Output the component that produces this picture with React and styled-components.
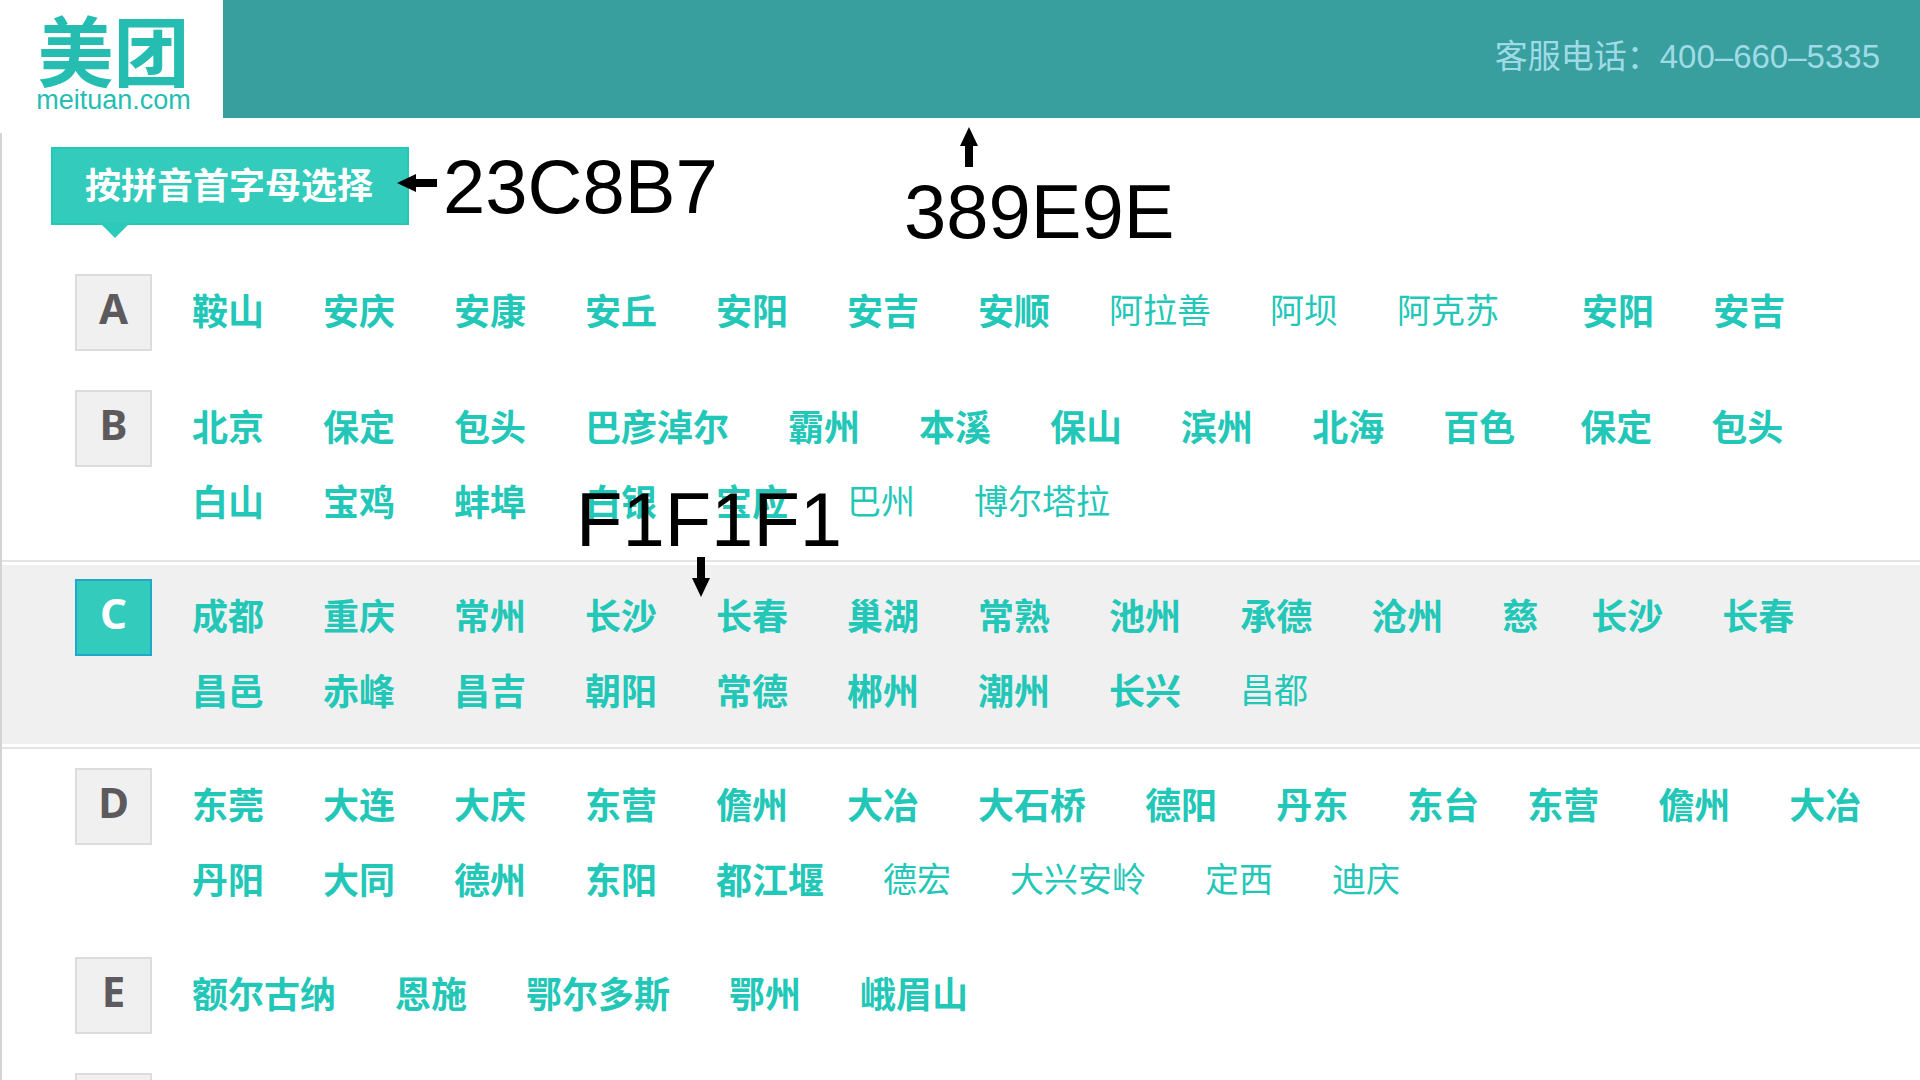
import React from "react";
import styled, { createGlobalStyle, css } from "styled-components";

const GlobalStyle = createGlobalStyle`
  *, *::before, *::after { box-sizing: border-box; }
  body {
    margin: 0;
    background: #fff;
    font-family: "Liberation Sans", "Noto Sans CJK SC", sans-serif;
  }
`;

const Page = styled.div`
  position: relative;
  display: flex;
  flex-direction: column;
  height: 100vh;
  overflow: hidden;
`;

const Header = styled.header`
  display: flex;
  flex: none;
  height: 118px;
  background: #389e9e;
`;

const Logo = styled.a`
  display: flex;
  flex-direction: column;
  align-items: center;
  width: 223px;
  padding: 10px 0 0 4px;
  background: #fff;
  color: #25bdb2;
  text-decoration: none;
`;

const LogoName = styled.span`
  font: 700 76px/76px "Noto Sans CJK SC", sans-serif;
`;

const LogoDomain = styled.span`
  font-size: 27px;
  line-height: 28px;
`;

const Hotline = styled.p`
  margin: 0 40px 0 auto;
  color: #9fdbe6;
  font-size: 33px;
  line-height: 114px;
  white-space: nowrap;
`;

const Main = styled.main`
  flex: 1;
  margin-top: 15px;
  padding-top: 14px;
  border-left: 2px solid #d4d4d4;
`;

const Banner = styled.h1`
  position: relative;
  width: fit-content;
  height: 78px;
  margin: 0 0 30px 49px;
  padding: 0 34px 0 32px;
  border: 2px solid #23c8b7;
  background: #33cbbc;
  color: #fff;
  font: 700 36px/68px "Noto Sans CJK SC", sans-serif;

  &::after {
    content: "";
    position: absolute;
    top: 100%;
    left: 47px;
    border: 15px solid transparent;
    border-top-color: #2bcab9;
    border-bottom: 0;
  }
`;

const Section = styled.section`
  display: flex;
  align-items: flex-start;
  gap: 40px;
  padding: 19px 0 20px 73px;
  ${(p) =>
    p.$active &&
    css`
      padding-top: 17px;
      padding-bottom: 18px;
      border: solid #e4e4e4;
      border-width: 2px 0;
      background: #f0f0f0;
      box-shadow: inset 0 3px #fff, inset 0 -3px #fff;
    `}
`;

const Letter = styled.h2`
  flex: none;
  width: 77px;
  height: 77px;
  margin: 0;
  border: 2px solid ${(p) => (p.$active ? "#20a8cc" : "#dcdcdc")};
  background: ${(p) => (p.$active ? "#33cbbc" : "#f0f0f0")};
  color: ${(p) => (p.$active ? "#fff" : "#5c5a5c")};
  font: 700 42px/64px "Noto Sans", sans-serif;
  text-align: center;
`;

const Lines = styled.div`
  flex: 1;
`;

const Line = styled.div`
  display: flex;
  gap: ${(p) => p.$gap}px;
  height: 75px;
`;

const Cities = styled.ul`
  display: flex;
  gap: 59px;
  margin: 0;
  padding: 0;
  list-style: none;
`;

const City = styled.a`
  color: #22c7b7;
  font-family: "Noto Sans CJK SC", sans-serif;
  font-size: ${(p) => (p.$minor ? 34 : 36)}px;
  font-weight: ${(p) => (p.$minor ? 400 : 700)};
  line-height: 70px;
  text-decoration: none;
  white-space: nowrap;
`;

const Note = styled.span`
  position: absolute;
  top: ${(p) => p.$top}px;
  left: ${(p) => p.$left}px;
  color: #000;
  font-size: 76px;
  line-height: 76px;
`;

const Arrow = styled.svg`
  position: absolute;
  top: ${(p) => p.$top}px;
  left: ${(p) => p.$left}px;
`;

// A leading "~" marks a smaller, lighter city.
const SECTIONS = [
  {
    letter: "A",
    lines: [
      { cities: "鞍山 安庆 安康 安丘 安阳 安吉 安顺 ~阿拉善 ~阿坝 ~阿克苏", more: "安阳 安吉", gap: 83 },
    ],
  },
  {
    letter: "B",
    lines: [
      { cities: "北京 保定 包头 巴彦淖尔 霸州 本溪 保山 滨州 北海 百色", more: "保定 包头", gap: 65 },
      { cities: "白山 宝鸡 蚌埠 白银 宝应 ~巴州 ~博尔塔拉" },
    ],
  },
  {
    letter: "C",
    active: true,
    lines: [
      { cities: "成都 重庆 常州 长沙 长春 巢湖 常熟 池州 承德 沧州 慈", more: "长沙 长春", gap: 53 },
      { cities: "昌邑 赤峰 昌吉 朝阳 常德 郴州 潮州 长兴 ~昌都" },
    ],
  },
  {
    letter: "D",
    lines: [
      { cities: "东莞 大连 大庆 东营 儋州 大冶 大石桥 德阳 丹东 东台", more: "东营 儋州 大冶", gap: 48 },
      { cities: "丹阳 大同 德州 东阳 都江堰 ~德宏 ~大兴安岭 ~定西 ~迪庆" },
    ],
  },
  { letter: "E", lines: [{ cities: "额尔古纳 恩施 鄂尔多斯 鄂州 峨眉山" }] },
  { letter: "", lines: [] },
];

function CityList({ names }) {
  return (
    <Cities>
      {names.split(" ").map((name) => {
        const minor = name.startsWith("~");
        return (
          <li key={name}>
            <City href="#" $minor={minor}>
              {minor ? name.slice(1) : name}
            </City>
          </li>
        );
      })}
    </Cities>
  );
}

export default function App() {
  return (
    <Page>
      <GlobalStyle />
      <Header>
        <Logo href="#">
          <LogoName>美团</LogoName>
          <LogoDomain>meituan.com</LogoDomain>
        </Logo>
        <Hotline>客服电话：400–660–5335</Hotline>
      </Header>
      <Main>
        <Banner>按拼音首字母选择</Banner>
        {SECTIONS.map(({ letter, active, lines }) => (
          <Section key={letter} $active={active}>
            <Letter $active={active}>{letter}</Letter>
            <Lines>
              {lines.map((line) => (
                <Line key={line.cities} $gap={line.gap || 59}>
                  <CityList names={line.cities} />
                  {line.more && <CityList names={line.more} />}
                </Line>
              ))}
            </Lines>
          </Section>
        ))}
      </Main>

      <Arrow $top={174} $left={397} width="40" height="18" viewBox="0 0 40 18">
        <path d="M0 9 19 0V5H40V13H19V18Z" />
      </Arrow>
      <Note $top={149} $left={443}>23C8B7</Note>
      <Arrow $top={127} $left={960} width="18" height="40" viewBox="0 0 18 40">
        <path d="M9 0 18 19H13V40H5V19H0Z" />
      </Arrow>
      <Note $top={174} $left={904}>389E9E</Note>
      <Note $top={482} $left={576}>F1F1F1</Note>
      <Arrow $top={557} $left={692} width="18" height="40" viewBox="0 0 18 40">
        <path d="M9 40 0 21H5V0H13V21H18Z" />
      </Arrow>
    </Page>
  );
}
